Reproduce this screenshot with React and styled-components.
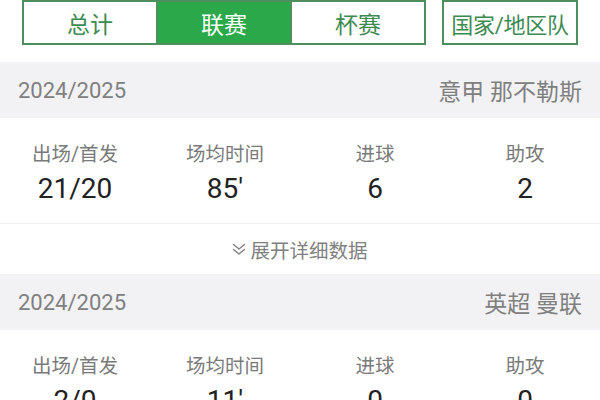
import React from 'react';
import styled, { createGlobalStyle } from 'styled-components';

const seasons = [
  {
    year: '2024/2025',
    league: '意甲 那不勒斯',
    stats: [
      { label: '出场/首发', value: '21/20' },
      { label: '场均时间', value: "85'" },
      { label: '进球', value: '6' },
      { label: '助攻', value: '2' },
    ],
  },
  {
    year: '2024/2025',
    league: '英超 曼联',
    stats: [
      { label: '出场/首发', value: '2/0' },
      { label: '场均时间', value: "11'" },
      { label: '进球', value: '0' },
      { label: '助攻', value: '0' },
    ],
  },
];

const tabs = ['总计', '联赛', '杯赛'];

const DoubleChevron = () => (
  <svg width="14" height="14" viewBox="0 0 14 14" fill="none" stroke="currentColor" strokeWidth="1.4" strokeLinecap="round" strokeLinejoin="round">
    <path d="M1.5 2.5 7 7l5.5-4.5" />
    <path d="M1.5 7.5 7 12l5.5-4.5" />
  </svg>
);

const App = () => {
  return (
    <>
      <GlobalStyle />
      <Page>
        <TopBar>
          <TabGroup>
            {tabs.map((t, i) => (
              <Tab key={t} $active={i === 1}>
                {t}
              </Tab>
            ))}
          </TabGroup>
          <CountryButton>国家/地区队</CountryButton>
        </TopBar>

        {seasons.map((s, i) => (
          <Section key={i}>
            <SeasonHeader>
              <Year>{s.year}</Year>
              <League>{s.league}</League>
            </SeasonHeader>
            <StatsRow>
              {s.stats.map((st) => (
                <Stat key={st.label}>
                  <StatLabel>{st.label}</StatLabel>
                  <StatValue>{st.value}</StatValue>
                </Stat>
              ))}
            </StatsRow>
            <Expand>
              <DoubleChevron />
              展开详细数据
            </Expand>
          </Section>
        ))}
      </Page>
    </>
  );
};

export default App;

// STYLED COMPONENTS
const GlobalStyle = createGlobalStyle`
  body {
    margin: 0;
    background: #fff;
    font-family: Roboto, "Noto Sans CJK SC", sans-serif;
  }
`;

const Page = styled.div`
  width: 600px;
  height: 400px;
  overflow: hidden;
  background: #fff;
`;

const TopBar = styled.div`
  display: flex;
  gap: 16px;
  padding: 0 22px 17px;
`;

const TabGroup = styled.div`
  display: flex;
  width: 404px;
  height: 45px;
  border: 2px solid #4f8f5f;
  box-sizing: border-box;
`;

const Tab = styled.div`
  flex: 1;
  display: flex;
  align-items: center;
  justify-content: center;
  font-size: 23px;
  color: ${(p) => (p.$active ? '#fff' : '#3d8a52')};
  background: ${(p) => (p.$active ? '#2aa84a' : '#fff')};
  & + & {
    border-left: 2px solid #4f8f5f;
  }
`;

const CountryButton = styled.div`
  width: 136px;
  height: 45px;
  box-sizing: border-box;
  border: 2px solid #4f8f5f;
  display: flex;
  align-items: center;
  justify-content: center;
  font-size: 22px;
  letter-spacing: -0.3px;
  color: #3d8a52;
  white-space: nowrap;
  overflow: hidden;
`;

const Section = styled.div``;

const SeasonHeader = styled.div`
  height: 56px;
  background: #f2f2f4;
  display: flex;
  align-items: center;
  justify-content: space-between;
  padding: 0 18px;
`;

const Year = styled.span`
  font-size: 22px;
  color: #808080;
`;

const League = styled.span`
  font-size: 23px;
  color: #808080;
`;

const StatsRow = styled.div`
  display: grid;
  grid-template-columns: repeat(4, 1fr);
  height: 105px;
  align-content: center;
  border-bottom: 1px solid #f0f0f0;
`;

const Stat = styled.div`
  display: flex;
  flex-direction: column;
  align-items: center;
  gap: 5px;
  padding-top: 2px;
`;

const StatLabel = styled.span`
  font-size: 19.5px;
  color: #7a7a7a;
`;

const StatValue = styled.span`
  font-size: 28px;
  color: #222;
`;

const Expand = styled.div`
  height: 50px;
  display: flex;
  align-items: center;
  justify-content: center;
  gap: 4px;
  font-size: 19.5px;
  color: #808080;
  svg {
    color: #808080;
  }
`;
